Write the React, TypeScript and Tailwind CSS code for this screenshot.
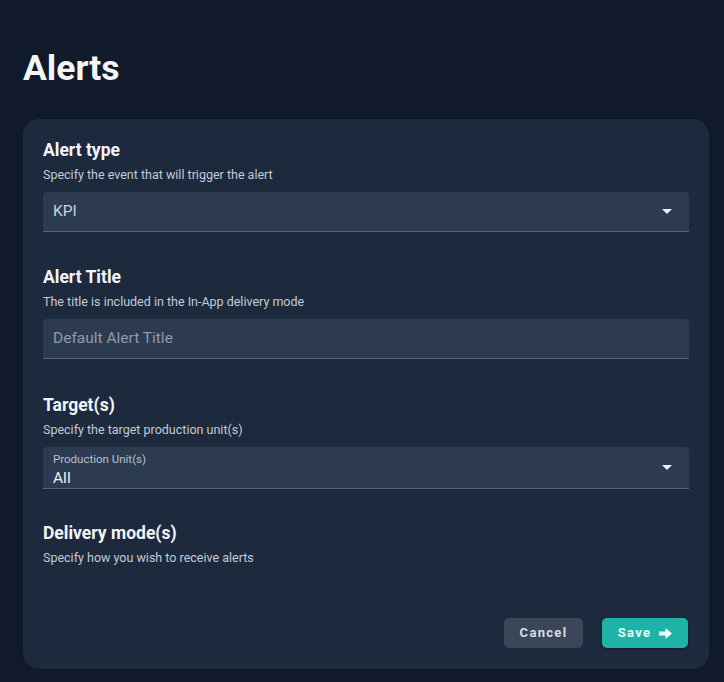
// Alert settings form
function Caret() {
  return (
    <svg width="10" height="5" viewBox="0 0 10 5" className="shrink-0">
      <path d="M0 0 L10 0 L5 5 Z" fill="#f1f5f9" />
    </svg>
  );
}

function Section({
  title,
  hint,
  gap = "mb-[33px]",
  children,
}: {
  title: string;
  hint: string;
  gap?: string;
  children?: React.ReactNode;
}) {
  return (
    <div className="flex flex-col">
      <h2 className="text-[17.5px] leading-6 font-bold text-[#f1f5f9]">{title}</h2>
      <p className="mt-[5px] text-[12.5px] leading-4 text-[#c3cbd6]">{hint}</p>
      {children && <div className={`mt-[9px] ${gap}`}>{children}</div>}
    </div>
  );
}

export default function App() {
  return (
    <div
      className="min-h-[682px] w-full bg-[#101a2a] pl-[23px] pr-[15px] pt-[45px] pb-[14px]"
      style={{ fontFamily: "Roboto, 'Noto Sans', sans-serif" }}
    >
      <h1 className="text-[35.5px] leading-[46px] font-bold text-[#f3f5f8]">Alerts</h1>

      <div className="mt-[28px] rounded-2xl bg-[#1d293d] px-5 pt-[19px] pb-[21px]">
        <Section title="Alert type" hint="Specify the event that will trigger the alert">
          <div className="flex h-10 items-center justify-between rounded-t bg-[#2d3b51] border-b border-[#56647a] pl-[10px] pr-[17px]">
            <span className="text-[15.5px] text-[#c9d1dc]">KPI</span>
            <Caret />
          </div>
        </Section>

        <Section
          title="Alert Title"
          hint="The title is included in the In-App delivery mode"
          gap="mb-[34px]"
        >
          <div className="flex h-10 items-center rounded-t bg-[#2d3b51] border-b border-[#56647a] pl-[10px]">
            <span className="text-[15.5px] text-[#8e99aa]">Default Alert Title</span>
          </div>
        </Section>

        <Section
          title="Target(s)"
          hint="Specify the target production unit(s)"
          gap="mb-[32px]"
        >
          <div className="flex h-[42px] items-center justify-between rounded-t bg-[#2d3b51] border-b border-[#56647a] pl-[10px] pr-[17px]">
            <div className="flex flex-col pt-[5px]">
              <span className="text-[11.5px] leading-[13px] text-[#b7c0cc]">Production Unit(s)</span>
              <span className="mt-[2px] text-[15.5px] leading-[20px] text-[#eef2f6]">All</span>
            </div>
            <Caret />
          </div>
        </Section>

        <Section title="Delivery mode(s)" hint="Specify how you wish to receive alerts" />

        <div className="mt-[52px] flex justify-end gap-[19px] pr-px">
          <button className="h-[30px] w-[79px] rounded-[5px] bg-[#3b4659] text-[13px] font-bold tracking-[0.1em] text-[#d7dde6]">
            Cancel
          </button>
          <button className="flex h-[30px] w-[86px] items-center justify-center gap-2 rounded-[5px] bg-[#1fb3a8] text-[13px] font-bold tracking-[0.1em] text-[#e9fbf8] shadow-[0_1px_2px_rgba(0,0,0,0.4)]">
            Save
            <svg width="13" height="11" viewBox="0 0 13 11">
              <path d="M0 3.5 H6.5 V0 L13 5.5 L6.5 11 V7.5 H0 Z" fill="#f4fffd" />
            </svg>
          </button>
        </div>
      </div>
    </div>
  );
}
